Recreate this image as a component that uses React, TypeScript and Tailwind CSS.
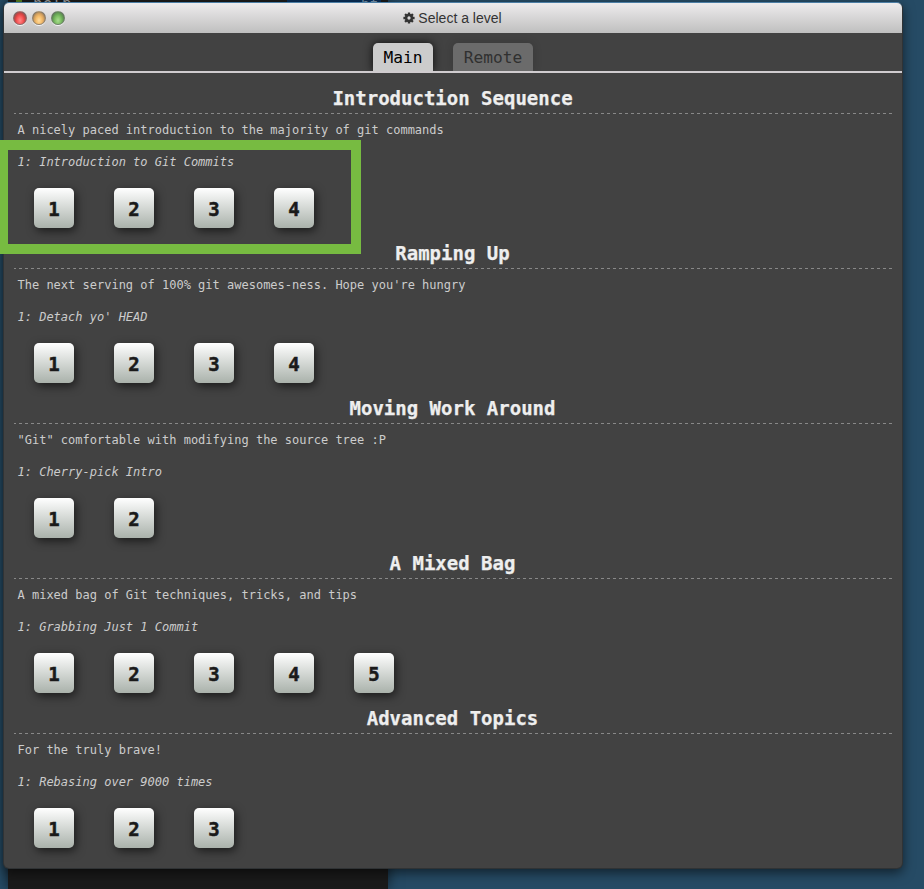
import React from "react";

type Sequence = { title: string; about: string; level: string; count: number };

const sequences: Sequence[] = [
  { title: "Introduction Sequence", about: "A nicely paced introduction to the majority of git commands", level: "1: Introduction to Git Commits", count: 4 },
  { title: "Ramping Up", about: "The next serving of 100% git awesomes-ness. Hope you're hungry", level: "1: Detach yo' HEAD", count: 4 },
  { title: "Moving Work Around", about: "\"Git\" comfortable with modifying the source tree :P", level: "1: Cherry-pick Intro", count: 2 },
  { title: "A Mixed Bag", about: "A mixed bag of Git techniques, tricks, and tips", level: "1: Grabbing Just 1 Commit", count: 5 },
  { title: "Advanced Topics", about: "For the truly brave!", level: "1: Rebasing over 9000 times", count: 3 },
];

const lights = [
  "bg-[radial-gradient(ellipse_at_50%_70%,#ff8a8a_0%,#f85858_35%,#d94343_55%,#7a5555_85%)]",
  "bg-[radial-gradient(ellipse_at_50%_70%,#ffdca0_0%,#f5bd6b_35%,#d9a460_55%,#857258_85%)]",
  "bg-[radial-gradient(ellipse_at_50%_70%,#a9dc90_0%,#80c166_35%,#68a656_55%,#54704e_85%)]",
];

function Gear() {
  return (
    <svg width="12" height="12" viewBox="-6 -6 12 12" aria-hidden="true">
      <g fill="currentColor">
        {[0, 45, 90, 135].map((a) => (
          <rect key={a} x="-1.2" y="-5.6" width="2.4" height="3.2" rx="0.3" transform={`rotate(${a})`} />
        ))}
        {[180, 225, 270, 315].map((a) => (
          <rect key={a} x="-1.2" y="-5.6" width="2.4" height="3.2" rx="0.3" transform={`rotate(${a})`} />
        ))}
      </g>
      <circle r="2.9" fill="none" stroke="currentColor" strokeWidth="2.5" />
    </svg>
  );
}

function LevelSection({ title, about, level, count }: Sequence) {
  return (
    <section className="h-[155px]">
      <h2 className="-ml-px h-[30px] text-center text-[19px] leading-[31px] font-bold text-[#eee] [-webkit-text-stroke:0.25px_#eee]">{title}</h2>
      <div className="h-px bg-[repeating-linear-gradient(90deg,#888_0_3px,transparent_3px_6px)] bg-[position:-1px_0] bg-[length:1200px_1px]" />
      <p className="h-8 pl-[3.5px] text-[12px] leading-8 text-[#ccc]">{about}</p>
      <p className="h-8 pl-[3.5px] text-[12px] leading-8 text-[#ccc] italic">{level}</p>
      <div className="flex gap-10 pt-[10px] pl-5">
        {Array.from({ length: count }, (_, i) => (
          <button
            key={i}
            className="h-10 w-10 rounded-[5px] bg-linear-to-b from-white to-[#aab2ab] text-center text-[19px] leading-[42px] font-bold text-[#1a1a1a] shadow-[2px_3px_10px_rgba(0,0,0,0.6)] [-webkit-text-stroke:0.5px_#1a1a1a]"
          >
            {i + 1}
          </button>
        ))}
      </div>
    </section>
  );
}

export default function App() {
  return (
    <div className="relative h-[889px] w-[924px] overflow-hidden bg-[#264b65] font-['DejaVu_Sans_Mono',monospace]">
      {/* terminal window behind the dialog */}
      <div className="absolute top-0 left-2 h-[889px] w-[380px] bg-[#1a1a1a] shadow-[0_0_12px_rgba(0,0,0,0.6)]">
        <div className="absolute top-0 left-[279px] h-2 w-[94px] bg-[#082c55]" />
        <div className="absolute top-0 left-2 h-1 w-[6px] bg-[#557c20]" />
        <span className="absolute -top-[4px] left-[25px] text-[16px] leading-[16px] text-[#999]">help</span>
        <span className="absolute -top-[4px] left-[353px] text-[14px] leading-[16px] text-[#7894ac]">hf</span>
      </div>

      <div className="absolute top-[3px] left-1 flex h-[865px] w-[898px] flex-col rounded-[5px] bg-[#424242] shadow-[0_0_0_1px_#303335,0_4px_12px_1px_rgba(0,0,0,0.55)]">
        <header className="relative flex h-[30px] shrink-0 items-center justify-center rounded-t-[5px] bg-linear-to-b from-[#eeeced] to-[#bfbfbf] shadow-[0_-1px_0_#4c7ea5]">
          <div className="absolute top-[8px] left-[9px] flex gap-[5px]">
            {lights.map((light, i) => (
              <span key={i} className={`h-[14px] w-[14px] rounded-full border border-[#77777799] shadow-[0_1px_0_#f5f5f5] ${light}`} />
            ))}
          </div>
          <div className="-ml-px flex items-center gap-[3px] font-['Liberation_Sans',Arial,sans-serif] text-[14px] leading-[30px] text-[#333]">
            <Gear />
            <span>Select a level</span>
          </div>
        </header>

        <nav className="flex h-10 shrink-0 items-end justify-center gap-5 border-b-2 border-[#d0cccf] text-[16.2px]">
          <div className="h-7 w-[60px] rounded-t-[5px] bg-[#ccc] text-center leading-[29px] text-black shadow-[0_0_10px_rgba(0,0,0,0.8)] [clip-path:inset(-15px_-15px_0_-15px)]">Main</div>
          <div className="h-7 w-20 rounded-t-[5px] bg-[#6b6b6b] text-center leading-[29px] text-[#303030] shadow-[0_0_10px_rgba(0,0,0,0.16)] [clip-path:inset(-15px_-15px_0_-15px)]">Remote</div>
        </nav>

        <main className="px-[10px] pt-[10px]">
          {sequences.map((s) => (
            <LevelSection key={s.title} {...s} />
          ))}
        </main>
      </div>

      {/* callout around the first group of levels */}
      <div className="pointer-events-none absolute top-[140px] -left-[2px] h-[114px] w-[363px] border-10 border-[#77bb41]" />
    </div>
  );
}
